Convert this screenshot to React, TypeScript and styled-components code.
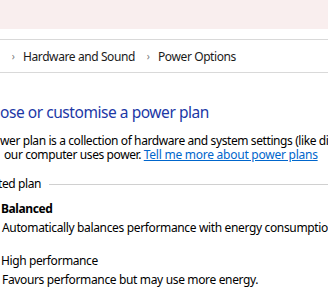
import React from 'react'
import styled, { createGlobalStyle } from 'styled-components'

const GlobalStyle = createGlobalStyle`
  html, body {
    margin: 0;
    padding: 0;
    background: #ffffff;
    overflow: hidden;
  }
  body {
    font-family: 'Noto Sans', 'Open Sans', 'DejaVu Sans', sans-serif;
    color: #000000;
    letter-spacing: -0.4px;
  }
`

const Window = styled.div`
  width: 328px;
  height: 307px;
  display: flex;
  flex-direction: column;
  overflow: hidden;
  background: #ffffff;
`

const TitleBand = styled.div`
  height: 29px;
  flex-shrink: 0;
  background: #f9eeee;
`

const AddressBar = styled.div`
  margin-top: 10px;
  height: 32px;
  flex-shrink: 0;
  border-top: 1px solid #d9d9d9;
  border-bottom: 1px solid #d9d9d9;
  display: flex;
  align-items: center;
  padding-left: 9px;
  font-size: 12px;
  white-space: nowrap;
`

const Crumb = styled.span`
  color: #1a1a1a;
`

const Chevron = styled.span<{ $before?: number }>`
  display: inline-block;
  width: 8px;
  text-align: center;
  margin-left: ${p => p.$before ?? 0}px;
  margin-right: 6px;
  color: #7a7a7a;
  font-size: 10px;
`

const Content = styled.div`
  padding-top: 29px;
  white-space: nowrap;
`

const Heading = styled.h1`
  margin: 0;
  font-size: 15.5px;
  font-weight: 400;
  line-height: 20px;
  letter-spacing: -0.45px;
  color: #1c38a6;
`

const IntroBlock = styled.div`
  margin-top: 12px;
`

const Intro = styled.p<{ $indent?: number }>`
  margin: 0;
  font-size: 12px;
  line-height: 14px;
  padding-left: ${p => p.$indent ?? 0}px;
`

const Link = styled.a`
  color: #0066cc;
  letter-spacing: -0.25px;
  text-decoration: underline;
  cursor: pointer;
`

const GroupHeader = styled.div`
  margin-top: 14px;
  margin-left: -2px;
  display: flex;
  align-items: center;
  gap: 8px;
  font-size: 12px;
  line-height: 16px;
`

const GroupRule = styled.div`
  flex: 1;
  height: 1px;
  background: #d0d0d0;
`

const Plan = styled.div<{ $gap: number }>`
  margin-top: ${p => p.$gap}px;
  padding-left: 1px;
  display: flex;
  flex-direction: column;
  gap: 3px;
`

const PlanName = styled.div<{ $selected?: boolean }>`
  font-size: 12px;
  line-height: 16px;
  font-weight: ${p => (p.$selected ? 700 : 400)};
`

const PlanDesc = styled.div`
  font-size: 12px;
  line-height: 16px;
  padding-left: 1px;
  letter-spacing: -0.35px;
`

const plans = [
  { name: 'Balanced', desc: 'Automatically balances performance with energy consumption on capable hardware.', selected: true, gap: 9 },
  { name: 'High performance', desc: 'Favours performance but may use more energy.', selected: false, gap: 17 },
]

export default function App() {
  return (
    <Window>
      <GlobalStyle />
      <TitleBand />
      <AddressBar>
        <Chevron>›</Chevron>
        <Crumb>Hardware and Sound</Crumb>
        <Chevron $before={9}>›</Chevron>
        <Crumb>Power Options</Crumb>
      </AddressBar>
      <Content>
        <Heading>ose or customise a power plan</Heading>
        <IntroBlock>
          <Intro>wer plan is a collection of hardware and system settings (like display brightness, sleep, etc.) that manages how</Intro>
          <Intro $indent={4}>
            our computer uses power. <Link>Tell me more about power plans</Link>
          </Intro>
        </IntroBlock>
        <GroupHeader>
          <span>ted plan</span>
          <GroupRule />
        </GroupHeader>
        {plans.map(plan => (
          <Plan key={plan.name} $gap={plan.gap}>
            <PlanName $selected={plan.selected}>{plan.name}</PlanName>
            <PlanDesc>{plan.desc}</PlanDesc>
          </Plan>
        ))}
      </Content>
    </Window>
  )
}
